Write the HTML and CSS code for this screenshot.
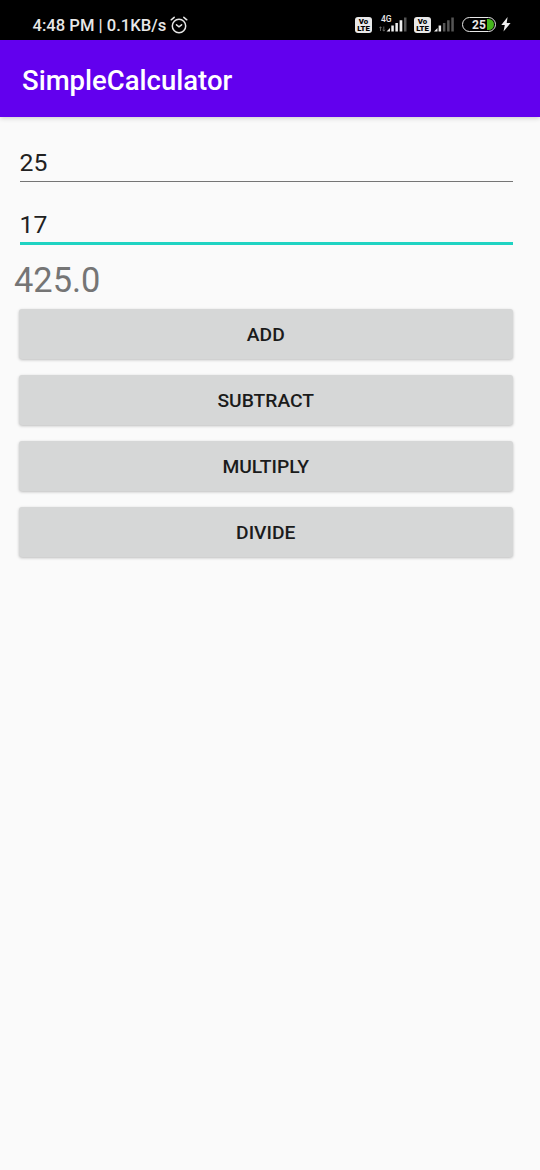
FILE: index.html
```html
<!DOCTYPE html>
<html lang="en">
<head>
<meta charset="utf-8">
<title>SimpleCalculator</title>
<link rel="stylesheet" href="styles.css">
</head>
<body>
<header class="status">
  <span class="status-text">4:48 PM | 0.1KB/s</span>
  <svg class="alarm" width="18" height="18" viewBox="0 0 18 18" fill="none" stroke="#e6e6e6" stroke-width="1.5" stroke-linecap="round"><circle cx="9" cy="10" r="6.7"/><path d="M1.2 3.8 4.2 1.3M13.8 1.3l3 2.5M6.5 8.8 9 10.8l2.6-2"/></svg>
  <span class="volte"><span>Vo</span><span>LTE</span></span>
  <span class="signal signal-one">
    <span class="network">4G</span>
    <svg width="28" height="17" viewBox="0 0 28 17"><path d="M1.5 15v-4M.3 12.2l1.200-1.500 1.200 1.500M4.800 10.500v4.500M3.600 13.700l1.200 1.500L6 13.700" fill="none" stroke="#777" stroke-width=".8"/><path d="M7.500 15.500H11V12zM12.300 15.500V9.500h2.500v6zM16.400 15.500V7h2.500v8.500zM20.600 15.500V4.300h2.700v11.200z" fill="#eee"/><path d="M25 1.500h2.500v14H25z" fill="#555"/></svg>
  </span>
  <span class="volte volte-two"><span>Vo</span><span>LTE</span></span>
  <svg class="signal-two" width="20" height="17" viewBox="0 0 20 17"><path d="M0 15.500h3.500V12zM4.600 15.500v-6h2.500v6z" fill="#eee"/><path d="M8.900 7h2.500v8.500H8.900zM13.100 4.300h2.500v11.200h-2.500zM17.300 1.500h2.500v14h-2.500z" fill="#555"/></svg>
  <span class="battery"><span class="percent">25</span><span class="charge"></span></span>
  <svg class="bolt" width="10" height="15" viewBox="0 0 10 15"><path d="M6.600 0 .3 8h3.500L2.500 14.500 9.600 6H5.700z" fill="#eee"/></svg>
</header>
<div class="toolbar"><h1>SimpleCalculator</h1></div>
<main>
  <div class="field">25</div>
  <div class="field focused">17</div>
  <output class="result">425.0</output>
  <div class="actions">
    <button>ADD</button>
    <button>SUBTRACT</button>
    <button>MULTIPLY</button>
    <button>DIVIDE</button>
  </div>
</main>
</body>
</html>
```
FILE: styles.css
```css
* { box-sizing: border-box; }
body {
  margin: 0;
  min-height: 1170px;
  background: #fafafa;
  font-family: Roboto, sans-serif;
  color: #212121;
}
.status {
  display: flex;
  align-items: flex-start;
  height: 40px;
  padding: 16px 0 0 32.5px;
  background: #000;
  color: #e8e8e8;
}
.status svg { display: block; flex: none; }
.status-text {
  width: 134px;
  margin-right: 3px;
  font-size: 16.6px;
  font-weight: 500;
  line-height: 20px;
  white-space: nowrap;
}
.volte {
  display: flex;
  flex-direction: column;
  flex: none;
  width: 17px;
  height: 16px;
  margin: 1px 0 0 167.5px;
  padding-top: 1px;
  border-radius: 3px;
  background: #e8e8e8;
  color: #000;
  font-size: 7.8px;
  font-weight: 900;
  line-height: 7px;
  text-align: center;
}
.volte-two { margin-left: 7px; }
.signal { position: relative; width: 28px; margin-left: 7px; }
.network {
  position: absolute;
  left: 2px;
  top: -1px;
  font-size: 8.5px;
  font-weight: 500;
  line-height: 9px;
}
.signal-two { margin-left: 3px; }
.battery {
  display: flex;
  flex: none;
  width: 34px;
  height: 15px;
  margin: 1px 0 0 8px;
  padding: 1px 1px 1px 9px;
  border: 1.5px solid #e8e8e8;
  border-radius: 8px;
}
.percent {
  width: 15px;
  font-size: 12px;
  font-weight: 700;
  line-height: 12px;
}
.charge {
  width: 7px;
  height: 11px;
  border-radius: 0 6px 6px 0;
  background: #45b51c;
}
.bolt { margin: 1px 0 0 5px; }
.toolbar {
  display: flex;
  align-items: center;
  height: 77px;
  padding: 5px 22px 0;
  background: #6200ee;
  color: #fff;
  box-shadow: 0 1px 5px rgba(0, 0, 0, .2);
}
h1 {
  margin: 0;
  font-size: 27.5px;
  font-weight: 500;
  line-height: 36px;
}
main { padding: 28px 27.5px 0 14px; }
.field {
  height: 37px;
  margin-left: 5.5px;
  border-bottom: 1px solid #757575;
  font-size: 24.75px;
  line-height: 36px;
}
.field.focused {
  height: 38px;
  margin-top: 25px;
  border-bottom: 3px solid #1fd3c2;
}
.result {
  display: block;
  height: 64px;
  color: #757575;
  font-size: 34.4px;
  line-height: 71px;
}
.actions { display: grid; gap: 16px; padding-left: 5px; }
button {
  height: 50px;
  padding: 1px 0 0;
  border: 0;
  border-radius: 3px;
  background: #d6d7d7;
  color: #1b1b1b;
  font: 500 19.25px/24px Roboto, sans-serif;
  box-shadow: 0 1px 3px rgba(0, 0, 0, .25);
}
```
